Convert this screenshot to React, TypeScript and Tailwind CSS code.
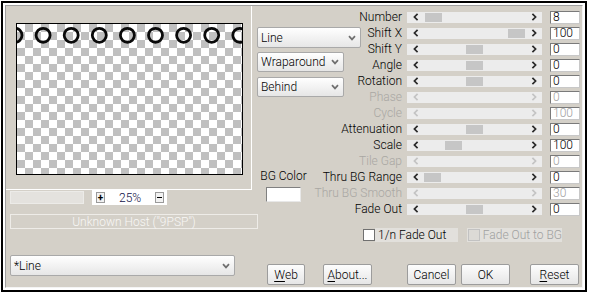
import React from "react";

type Row = { label: string; value: string; thumb?: number; disabled?: boolean };

const rows: Row[] = [
  { label: "Number", value: "8", thumb: 18 },
  { label: "Shift X", value: "100", thumb: 101 },
  { label: "Shift Y", value: "0", thumb: 59 },
  { label: "Angle", value: "0", thumb: 59 },
  { label: "Rotation", value: "0", thumb: 59 },
  { label: "Phase", value: "0", disabled: true },
  { label: "Cycle", value: "100", disabled: true },
  { label: "Attenuation", value: "0", thumb: 59 },
  { label: "Scale", value: "100", thumb: 38 },
  { label: "Tile Gap", value: "0", disabled: true },
  { label: "Thru BG Range", value: "0", thumb: 17 },
  { label: "Thru BG Smooth", value: "30", disabled: true },
  { label: "Fade Out", value: "0", thumb: 59 },
];

const Arrow = ({ left, color }: { left?: boolean; color: string }) => (
  <svg width="6" height="8" viewBox="0 0 6 8">
    <path
      d={left ? "M4.6 0.8 1.4 4 4.6 7.2" : "M1.4 0.8 4.6 4 1.4 7.2"}
      fill="none"
      stroke={color}
      strokeWidth="1.7"
    />
  </svg>
);

const DropChevron = () => (
  <svg width="8" height="6" viewBox="0 0 8 6">
    <path d="M1 1.2 4 4.4 7 1.2" fill="none" stroke="#6f6f6f" strokeWidth="1.7" />
  </svg>
);

const Select = ({ text, className }: { text: string; className: string }) => (
  <div
    className={`flex items-center justify-between border border-[#a9a9a9] rounded-[2px] bg-gradient-to-b from-white to-[#e6e6e6] pl-[3px] pr-[4px] ${className}`}
  >
    <span className="text-[12px] leading-none text-black">{text}</span>
    <DropChevron />
  </div>
);

const Button = ({ u, rest, className }: { u?: string; rest: string; className: string }) => (
  <div
    className={`h-[21px] flex items-center justify-center border border-[#9c9c9c] rounded-[2px] bg-gradient-to-b from-[#fdfdfd] to-[#e6e6e6] text-[12px] text-black ${className}`}
  >
    {u && <span className="underline underline-offset-2">{u}</span>}
    {rest}
  </div>
);

const Preview = () => (
  <svg width="225" height="150" className="block">
    <defs>
      <pattern id="chk" width="16" height="16" patternUnits="userSpaceOnUse">
        <rect width="16" height="16" fill="#ffffff" />
        <rect x="8" y="0" width="8" height="8" fill="#c0c0c0" />
        <rect x="0" y="8" width="8" height="8" fill="#c0c0c0" />
      </pattern>
    </defs>
    <rect width="225" height="150" fill="url(#chk)" />
    {[...Array(9)].map((_, i) => (
      <circle key={i} cx={-2 + 28.1 * i} cy={11.3} r={7} fill="none" stroke="#0a0a0a" strokeWidth="2.8" />
    ))}
  </svg>
);

export default function App() {
  return (
    <div className="w-[591px] h-[298px] bg-white pl-[1px] pt-[1px] font-['Roboto','Liberation_Sans',Arial,sans-serif] font-light">
      <div className="w-[586px] h-[291px] border-2 border-black bg-white p-[2px]">
        <div className="w-full h-full flex border-t border-l border-[#a0a0a0] border-r-[#f4f4f4] border-b-[#f4f4f4] border-r border-b bg-[#d4d0c8]">
          {/* left column */}
          <div className="w-[251px] shrink-0 flex flex-col">
            <div className="w-[246px] h-[184px] border-r border-b border-white">
              <div className="ml-[10px] mt-[17px] w-[227px] h-[152px] border border-black">
                <Preview />
              </div>
            </div>
            <div className="flex items-start">
              <div className="ml-[4px] mt-[1px] w-[74px] h-[13px] bg-[#e4e2de] border border-[#ecebe8]" />
              <div className="ml-[8px] w-[75px] h-[15px] bg-white flex items-center">
                <div className="ml-[4px] w-[9px] h-[11px] border border-[#9a9a9a] bg-[#f2f2f2] flex items-center justify-center text-[10px] font-bold leading-none text-black">
                  +
                </div>
                <span className="ml-[14px] text-[12px] leading-none text-[#101048]">25%</span>
                <div className="ml-[14px] w-[9px] h-[11px] border border-[#9a9a9a] bg-[#f2f2f2] flex items-center justify-center">
                  <div className="w-[5px] h-[1px] bg-black" />
                </div>
              </div>
            </div>
            <div className="ml-[4px] mt-[9px] w-[248px] h-[15px] border border-[#eeece8] flex items-center justify-center text-[12px] leading-none text-[#f8f7f5]">
              Unknown Host ("9PSP")
            </div>
            <Select text="*Line" className="ml-[4px] mt-[26px] w-[225px] h-[21px]" />
          </div>

          {/* right part */}
          <div className="flex flex-col">
            <div className="flex">
              <div className="w-[105px] shrink-0 flex flex-col">
                <Select text="Line" className="mt-[21px] w-[104px] h-[21px]" />
                <Select text="Wraparound" className="mt-[4px] w-[87px] h-[20px]" />
                <Select text="Behind" className="mt-[5px] w-[87px] h-[20px]" />
                <div className="ml-[9px] mt-[73px] w-[35px] flex flex-col items-center">
                  <span className="whitespace-nowrap text-[12px] leading-[13px] text-black">BG Color</span>
                  <div className="mt-[4px] w-[35px] h-[15px] bg-white border-t border-l border-[#808080] border-r-[#e8e8e8] border-b-[#e8e8e8] border-r border-b" />
                </div>
              </div>
              <div className="mt-[3px] flex flex-col">
                {rows.map((r) => (
                  <div key={r.label} className="h-[16px] flex items-center">
                    <div
                      className={`w-[40px] flex justify-end whitespace-nowrap text-[12px] leading-none ${
                        r.disabled ? "text-[#a9a7a3]" : "text-black"
                      }`}
                    >
                      {r.label}
                    </div>
                    <div className="relative ml-[5px] w-[135px] h-[11px] bg-[#ececec] flex items-center justify-between pl-[6px] pr-[5px]">
                      <Arrow left color={r.disabled ? "#c4c4c4" : "#2a2a2a"} />
                      {r.thumb !== undefined && (
                        <div className="absolute top-[1px] w-[17px] h-[9px] bg-[#c6c6c6]" style={{ left: r.thumb }} />
                      )}
                      <Arrow color={r.disabled ? "#c4c4c4" : "#2a2a2a"} />
                    </div>
                    <div
                      className={`ml-[8px] w-[30px] h-[13px] bg-white border-t border-l border-[#7a7a7a] border-r border-b border-r-[#c8c8c8] border-b-[#c8c8c8] pl-[2px] flex items-center text-[12px] leading-none ${
                        r.disabled ? "text-[#a0a0a0]" : "text-black"
                      }`}
                    >
                      {r.value}
                    </div>
                  </div>
                ))}
              </div>
            </div>

            <div className="mt-[11px] ml-[106px] flex items-center">
              <div className="w-[12px] h-[12px] bg-white border border-[#707070]" />
              <div className="w-[83px] h-[14px] bg-[#e2e0dc] pl-[3px] flex items-center whitespace-nowrap text-[12px] leading-none text-black">
                1/n Fade Out
              </div>
              <div className="ml-[9px] w-[95px] h-[14px] bg-[#e2e0dc] flex items-center">
                <div className="ml-[1px] w-[12px] h-[12px] border border-[#c2c2c2] bg-[#dcdad6]" />
                <span className="ml-[3px] whitespace-nowrap text-[12px] leading-none text-[#a0a0a0]">Fade Out to BG</span>
              </div>
            </div>

            <div className="mt-[22px] ml-[10px] flex">
              <Button u="W" rest="eb" className="w-[38px]" />
              <Button u="A" rest="bout..." className="ml-[18px] w-[49px]" />
              <Button rest="Cancel" className="ml-[35px] w-[49px]" />
              <Button rest="OK" className="ml-[5px] w-[49px]" />
              <Button u="R" rest="eset" className="ml-[20px] w-[49px]" />
            </div>
          </div>
        </div>
      </div>
    </div>
  );
}
